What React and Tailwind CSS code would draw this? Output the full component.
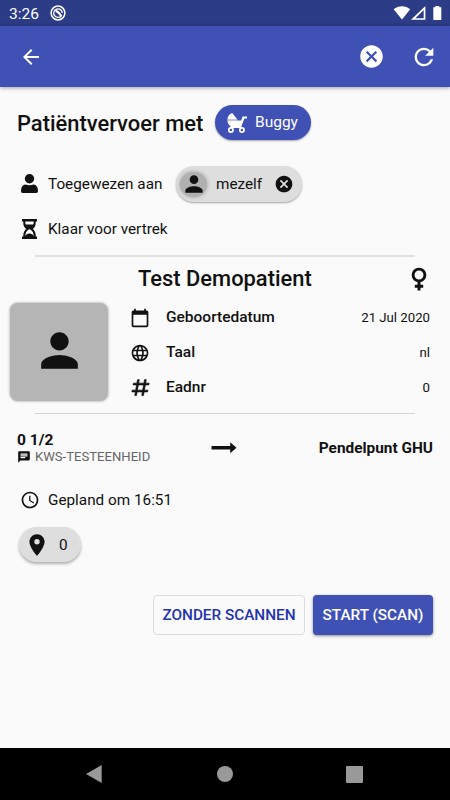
import {
  MdArrowBack,
  MdCancel,
  MdRefresh,
  MdPerson,
  MdCalendarToday,
  MdLanguage,
  MdChat,
  MdAccessTime,
  MdLocationOn,
} from "react-icons/md";

const StrollerIcon = () => (
  <svg viewBox="0 0 20 20" className="h-5 w-5 shrink-0" fill="currentColor">
    <path d="M.4 6.6C.4 3.5 2.3 1 5.2 0L10.4 6.6z" />
    <path d="M.4 7.4h13.8l1.4-3.9H20v2h-2.7l-2.4 6.4-.8 3.1H3.2l.2-2C1.5 11.5.4 9.6.4 7.4z" />
    <path d="M.4 6.4h10v1.2H.4z" opacity="0.55" />
    <circle cx="3.9" cy="17" r="2.1" fill="#3f51b5" stroke="currentColor" strokeWidth="1.8" />
    <circle cx="14.9" cy="17" r="2.1" fill="#3f51b5" stroke="currentColor" strokeWidth="1.8" />
  </svg>
);

const UserIcon = () => (
  <svg viewBox="0 0 19 20" className="h-5 w-[19px]" fill="currentColor">
    <circle cx="9.5" cy="4.8" r="4.7" />
    <path d="M1 16.8c0-3.9 1.6-6 4.4-6.4 2.6 1.1 5.6 1.1 8.2 0 2.8.4 4.400 2.500 4.400 6.400 0 1.500-.6 2.200-1.700 2.200H2.700C1.600 19 1 18.300 1 16.800z" />
  </svg>
);

const HourglassIcon = () => (
  <svg viewBox="0 0 19 20" className="h-5 w-[19px]" fill="currentColor">
    <path d="M2 0h15v2.6H2zM2 17.4h15V20H2z" />
    <path
      d="M4.3 2v2c0 3 1.400 4.500 3.300 6-1.900 1.500-3.300 3-3.300 6v2M14.700 2v2c0 3-1.400 4.500-3.300 6 1.900 1.500 3.300 3 3.300 6v2"
      fill="none"
      stroke="currentColor"
      strokeWidth="2"
    />
    <path d="M4.8 5.600h9.400L11 10.300H8z" />
    <path d="M5 18c.3-2.400 2.200-3.600 4.500-3.600s4.200 1.200 4.500 3.600z" />
  </svg>
);

const FemaleIcon = () => (
  <svg viewBox="0 0 16 24" className="ml-auto h-6 w-4" fill="none" stroke="currentColor">
    <circle cx="8" cy="8" r="5.9" strokeWidth="2.9" />
    <path d="M8 14v9.5M3.8 19.3h8.4" strokeWidth="3" />
  </svg>
);

const ArrowIcon = () => (
  <svg viewBox="0 0 26 12" className="h-3 w-[26px]" fill="currentColor">
    <path d="M.5 4.1h18.700V.3L25.500 5.800 19.200 11.300V7.400H.5z" />
  </svg>
);

const HashIcon = () => (
  <svg viewBox="0 0 24 24" className="h-[21px] w-[21px] shrink-0" fill="currentColor" stroke="currentColor" strokeWidth="0.8">
    <path d="M5.41,21L6.12,17H2.12L2.47,15H6.47L7.53,9H3.53L3.88,7H7.88L8.59,3H10.59L9.88,7H15.88L16.59,3H18.59L17.88,7H21.88L21.53,9H17.53L16.47,15H20.47L20.12,17H16.12L15.41,21H13.41L14.12,17H8.12L7.41,21H5.41M9.53,9L8.47,15H14.47L15.53,9H9.53Z" />
  </svg>
);

const details = [
  { icon: <MdCalendarToday className="h-5 w-5" />, label: "Geboortedatum", value: "21 Jul 2020" },
  { icon: <MdLanguage className="h-5 w-5" />, label: "Taal", value: "nl" },
  { icon: <HashIcon />, label: "Eadnr", value: "0" },
];

function StatusBar() {
  return (
    <div className="flex h-[26px] shrink-0 items-center bg-[#2c3c86] pl-[9px] pr-[7px] text-white">
      <span className="w-[30px] pt-[2px] text-[15.5px] leading-6">3:26</span>
      <svg viewBox="0 0 16 16" className="ml-[11px] h-4 w-4" fill="none" stroke="currentColor">
        <circle cx="8" cy="8" r="6.9" strokeWidth="1.5" />
        <path d="M11.2 11A4.300 4.300 0 1 1 12.300 8" strokeWidth="1.300" />
        <path d="M5.5 6.2C8 6 9 8 11.500 11.500" strokeWidth="2.200" />
      </svg>
      <svg viewBox="0 0 50 16" className="ml-auto h-4 w-[50px]" fill="currentColor">
        <path d="M.6 4.3C5.500.2 12.500.2 17.200 4.300L9 14.500z" />
        <path d="M32.4 1v13.800H18z" />
        <path d="M30.7 5v8.200h-8.300z" fill="#2c3c86" />
        <path d="M40.3 2.200h2V1h4v1.200h2V15h-8z" />
      </svg>
    </div>
  );
}

export default function App() {
  return (
    <div className="flex h-[800px] w-[450px] flex-col overflow-hidden bg-[#fafafa] font-['Roboto',sans-serif] text-[#111]">
      <StatusBar />
      <header className="flex h-[61px] shrink-0 items-center bg-[#3f51b5] pl-[19px] pr-3 text-white shadow-[0_1px_4px_rgba(0,0,0,0.35)]">
        <MdArrowBack className="h-6 w-6" />
        <MdCancel className="ml-auto h-[27px] w-[27px]" />
        <MdRefresh className="ml-[25px] h-7 w-7" />
      </header>

      <main className="flex flex-1 flex-col">
        <div className="mt-[18px] flex h-[35px] items-center pl-[17px]">
          <h1 className="w-[198px] whitespace-nowrap pt-[4px] text-[21.9px] font-medium">Patiëntvervoer met</h1>
          <div className="flex h-[35px] w-[96px] items-center gap-2 rounded-full bg-[#3f51b5] pl-[12px] text-[15.5px] text-white shadow-[0_1px_2px_rgba(0,0,0,0.35)]">
            <StrollerIcon />
            Buggy
          </div>
        </div>

        <div className="mt-[26px] flex h-9 items-center pl-5">
          <UserIcon />
          <span className="ml-[9px] w-[128px] whitespace-nowrap text-[15.3px]">Toegewezen aan</span>
          <div className="flex h-9 w-[126px] items-center rounded-full bg-[#dedede] pl-[4px] shadow-[0_1px_2px_rgba(0,0,0,0.35)]">
            <span className="flex h-[25px] w-[27px] items-center justify-center rounded-full bg-[#b0b0b0] shadow-[0_0_4px_#a0a0a0]">
              <MdPerson className="h-[26px] w-[26px]" />
            </span>
            <span className="ml-[9px] w-[58px] text-[15.3px]">mezelf</span>
            <MdCancel className="h-5 w-5" />
          </div>
        </div>

        <div className="mt-[15px] flex h-6 items-center pl-5">
          <HourglassIcon />
          <span className="ml-[9px] text-[15.3px]">Klaar voor vertrek</span>
        </div>

        <div className="mx-[35px] mt-[14px] h-[2px] bg-[#e0e0e0]" />

        <section className="flex h-[156px]">
          <div className="ml-[10px] mt-[46px] flex h-[98px] w-[98px] items-center justify-center rounded-lg bg-[#b5b5b5] pb-1 shadow-[0_0_3px_#999]">
            <MdPerson className="h-[55px] w-[55px]" />
          </div>
          <div className="ml-[22px] mr-5 flex-1">
            <div className="flex h-[43px] items-center pl-2 pr-[3px]">
              <h2 className="pt-[2px] text-[21.9px] font-medium">Test Demopatient</h2>
              <FemaleIcon />
            </div>
            {details.map((item) => (
              <div key={item.label} className="flex h-[35px] items-center">
                <span className="flex w-5 justify-center">{item.icon}</span>
                <span className="ml-4 text-[15.5px] font-medium">{item.label}</span>
                <span className="ml-auto text-[13.2px]">{item.value}</span>
              </div>
            ))}
          </div>
        </section>

        <div className="mx-[35px] h-px bg-[#d4d4d4]" />

        <section className="mt-[17px] flex h-[34px] items-center pl-[17px] pr-[17px]">
          <div className="w-[194px]">
            <div className="text-[15.5px] font-bold leading-[17px]">0 1/2</div>
            <div className="flex items-center text-[13.1px] leading-4 text-[#666]">
              <MdChat className="mr-1 h-[14px] w-[14px] text-[#111]" />
              KWS-TESTEENHEID
            </div>
          </div>
          <ArrowIcon />
          <span className="ml-auto pt-px text-[15.4px] font-bold">Pendelpunt GHU</span>
        </section>

        <div className="mt-[22px] flex h-[26px] items-center pl-5">
          <MdAccessTime className="h-5 w-5" />
          <span className="ml-2 text-[15.3px]">Gepland om 16:51</span>
        </div>
        <div className="ml-[19px] mt-[14px] flex h-[35px] w-[62px] items-center rounded-full bg-[#dedede] pl-[5px] shadow-[0_2px_3px_rgba(0,0,0,0.3)]">
          <MdLocationOn className="h-[26px] w-[26px]" />
          <span className="ml-[9px] pt-px text-[15.3px]">0</span>
        </div>

        <div className="mt-[33px] flex justify-end gap-2 pr-[17px] text-[15.3px] font-medium">
          <button className="h-10 w-[152px] whitespace-nowrap rounded-sm border border-[#dcdcdc] text-[#2433b0]">
            ZONDER SCANNEN
          </button>
          <button className="h-10 w-[120px] whitespace-nowrap rounded-sm bg-[#3f51b5] text-white shadow-[0_1px_3px_rgba(0,0,0,0.45)]">
            START (SCAN)
          </button>
        </div>
      </main>

      <nav className="flex h-[52px] items-center justify-between bg-black pl-[85px] pr-[87px] text-[#999]">
        <svg viewBox="0 0 18 18" className="h-[18px] w-[18px]" fill="currentColor">
          <path d="M1 9L16.7 0v18z" />
        </svg>
        <span className="h-4 w-4 rounded-full bg-[#999]" />
        <span className="h-[17px] w-[17px] rounded-[1px] bg-[#999]" />
      </nav>
    </div>
  );
}
